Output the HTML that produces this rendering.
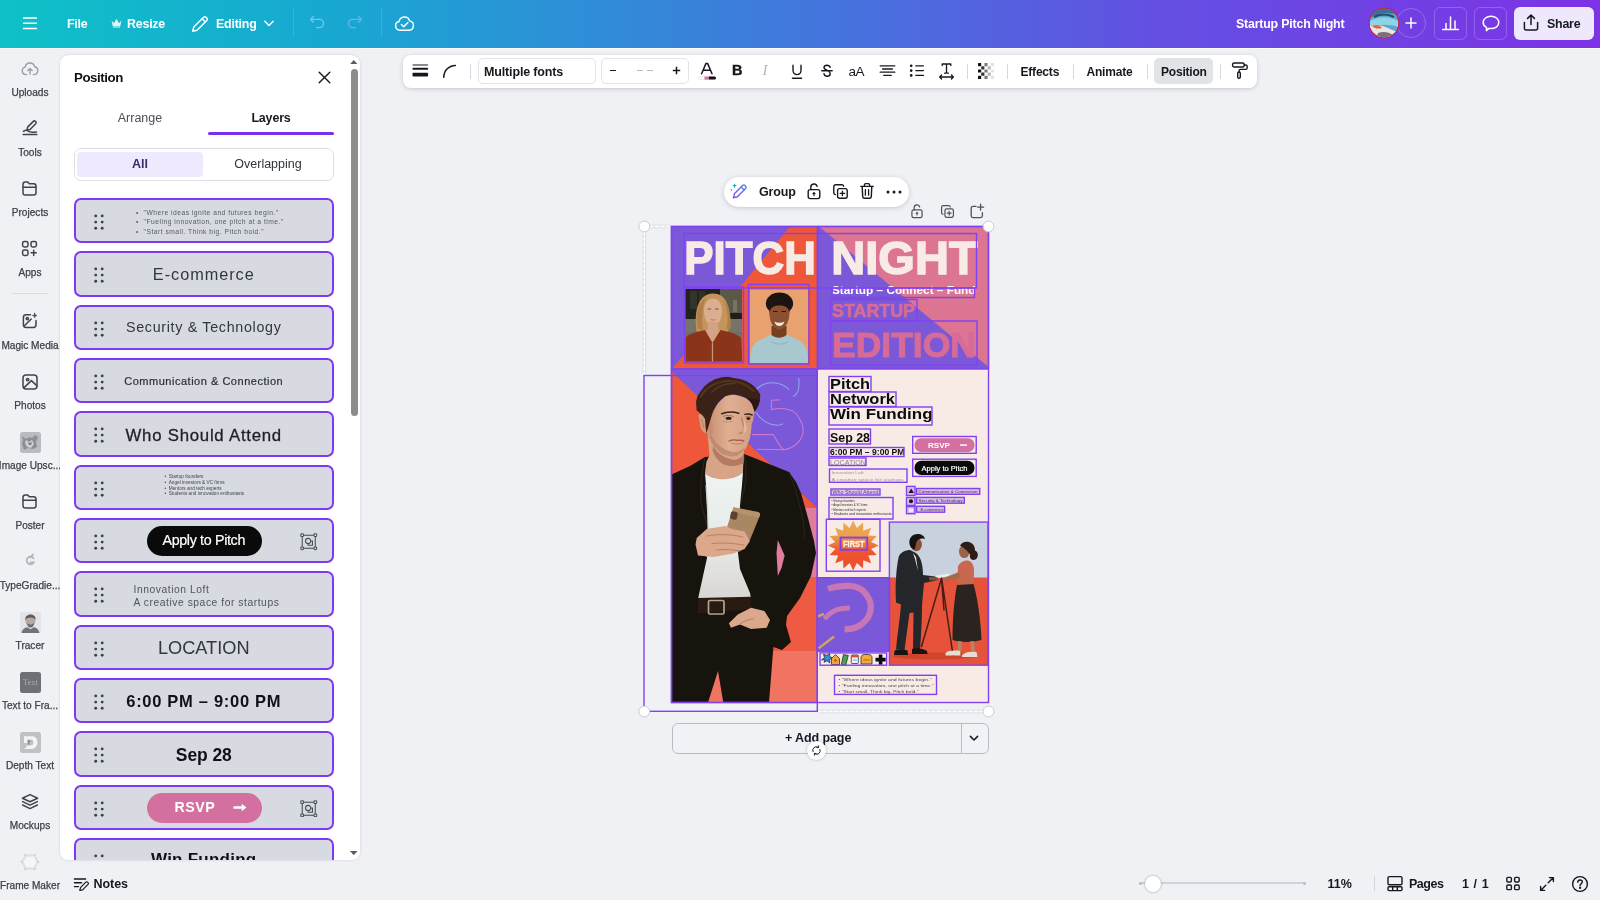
<!DOCTYPE html>
<html>
<head>
<meta charset="utf-8">
<title>Startup Pitch Night</title>
<style>
*{box-sizing:border-box;margin:0;padding:0}
html,body{width:1600px;height:900px;overflow:hidden;background:#f0f1f5;font-family:"Liberation Sans",sans-serif;color:#0e1318}
.abs{position:absolute}
#hdr,#rail,#panel,#tb,#cv,#bot{will-change:transform}
#hdr{position:absolute;left:0;top:0;width:1600px;height:47.500px;box-shadow:0 1px 0 rgba(255,255,255,.75);letter-spacing:-.2px;background:linear-gradient(90deg,#0ec1c7 0%,#19a6d2 22%,#3f7bdc 48%,#6350e2 72%,#7d32e6 100%);color:#fff;font-weight:700;font-size:12.4px}
#hdr .t{position:absolute;top:17.200px;line-height:15px;white-space:nowrap}
#rail{position:absolute;left:0;top:0;width:60px;height:900px}
#rail .it{-webkit-text-stroke:.25px #3c4148;position:absolute;left:-10px;width:80px;text-align:center;font-size:10.1px;color:#3c4148;white-space:nowrap;line-height:12px}
#rail svg{position:absolute}
#panel{position:absolute;left:60px;top:55px;width:300px;height:805px;background:#fff;border-radius:9px 9px 8px 8px;box-shadow:0 0 3px rgba(60,70,90,.18);overflow:hidden}
.layer{position:absolute;left:13.500px;width:260.500px;height:45.300px;background:#d8dae1;border:2px solid #8138f2;border-radius:7px;overflow:hidden}
.layer .dots{position:absolute;left:18px;top:14px;width:10px;height:16px}
.layer .c{position:absolute;left:0;right:0;text-align:center;white-space:nowrap;color:#20242b}
#tb{position:absolute;left:403px;top:55px;width:854px;height:33px;background:#fff;border-radius:8px;box-shadow:0 1px 4px rgba(50,60,80,.22)}
#tb .t{position:absolute;top:9.600px;letter-spacing:-.15px;font-size:12.5px;font-weight:700;line-height:15px;white-space:nowrap;color:#15191f}
#tb .sep{position:absolute;top:9px;width:1px;height:15px;background:#d5d8de}
#bot .t{position:absolute;font-size:12.5px;font-weight:700;line-height:15px;white-space:nowrap;color:#15191f}
</style>
</head>
<body>
<!-- HEADER -->
<div id="hdr">
  <svg class="abs" style="left:22px;top:15px" width="16" height="16" viewBox="0 0 16 16" fill="none" stroke="#fff" stroke-width="1.5" stroke-linecap="round"><path d="M1.6 3h12.8M1.6 8.3h12.8M1.6 13.6h12.8"/></svg>
  <div class="t" style="left:67px">File</div>
  <svg class="abs" style="left:111px;top:18px" width="11" height="10" viewBox="0 0 11 10" fill="#dff3fb"><path d="M0.6 2.6 3 5.2 5.5 0.8 8 5.2 10.4 2.6 9.3 8.2H1.7z"/><rect x="2" y="8.6" width="7" height="0.9"/></svg>
  <div class="t" style="left:127px">Resize</div>
  <svg class="abs" style="left:191px;top:15px" width="18" height="18" viewBox="0 0 18 18" fill="none" stroke="#fff" stroke-width="1.45" stroke-linejoin="round" stroke-linecap="round"><path d="M12.6 2.2a1.6 1.6 0 0 1 2.3 0l.9.9a1.6 1.6 0 0 1 0 2.3L6 15.2l-4.3 1.1 1.1-4.3z"/><path d="M11.2 3.8l3 3"/></svg>
  <div class="t" style="left:216px">Editing</div>
  <svg class="abs" style="left:263px;top:19px" width="12" height="9" viewBox="0 0 12 9" fill="none" stroke="#fff" stroke-width="1.5" stroke-linecap="round" stroke-linejoin="round"><path d="M1.8 2.3 6 6.5l4.2-4.2"/></svg>
  <div class="abs" style="left:293px;top:8px;width:1px;height:30px;background:rgba(255,255,255,.13)"></div>
  <svg class="abs" style="left:308px;top:14px" width="18" height="17" viewBox="0 0 18 17" fill="none" stroke="#6fc6ee" stroke-width="1.4" stroke-linecap="round" stroke-linejoin="round"><path d="M5.4 2.6 2.6 5.4l2.8 2.8"/><path d="M2.8 5.4h8.6a4.1 4.1 0 0 1 0 8.2H8.6"/></svg>
  <svg class="abs" style="left:346px;top:14px" width="18" height="17" viewBox="0 0 18 17" fill="none" stroke="#62b4ee" stroke-width="1.4" stroke-linecap="round" stroke-linejoin="round"><path d="M12.6 2.6l2.8 2.8-2.8 2.8"/><path d="M15.2 5.4H6.6a4.1 4.1 0 0 0 0 8.2h2.8"/></svg>
  <div class="abs" style="left:381px;top:8px;width:1px;height:30px;background:rgba(255,255,255,.13)"></div>
  <svg class="abs" style="left:394px;top:14px" width="21" height="18" viewBox="0 0 21 18" fill="none" stroke="#fff" stroke-width="1.45" stroke-linecap="round" stroke-linejoin="round"><path d="M6 16.2a4.4 4.4 0 0 1-.9-8.7 5.4 5.4 0 0 1 10.5-.6 4.7 4.7 0 0 1-.5 9.3z"/><path d="M7.4 10.6l2.3 2.2 4.2-4.4"/></svg>
  <div class="t" style="left:1236px">Startup Pitch Night</div>
  <div class="abs" style="left:1396px;top:8px;width:30px;height:30px;border-radius:50%;border:1px solid rgba(255,255,255,.22)"></div>
  <svg class="abs" style="left:1404px;top:16px" width="14" height="14" viewBox="0 0 14 14" fill="none" stroke="#fff" stroke-width="1.5" stroke-linecap="round"><path d="M7 2v10M2 7h10"/></svg>
  <svg class="abs" style="left:1368px;top:7px" width="32" height="32" viewBox="0 0 32 32"><defs><clipPath id="avc"><circle cx="16" cy="16" r="14.3"/></clipPath></defs><circle cx="16" cy="16" r="15.4" fill="#c32546"/><g clip-path="url(#avc)"><rect width="32" height="32" fill="#5aa7cf"/><path d="M0 0h32v9C22 4 10 6 0 12z" fill="#3a6f97"/><path d="M2 14c8-5 20-5 28 0v6c-8-3-20-3-28 1z" fill="#8fd3e6"/><path d="M0 20c8-3 14-2 20 1s9 4 12 3v8H0z" fill="#e9e4e6"/><path d="M4 19c4-2 8-1 10 2-3 1-7 1-10-2z" fill="#e2683a"/><path d="M10 26c5-2 11-1 15 2v4H8z" fill="#7c6f7c"/><path d="M6 10c6-3 14-3 20 0" stroke="#254b6b" stroke-width="2" fill="none"/></g></svg>
  <div class="abs" style="left:1434px;top:7px;width:33px;height:33px;border-radius:6px;border:1px solid rgba(255,255,255,.2)"></div>
  <svg class="abs" style="left:1441px;top:14px" width="19" height="18" viewBox="0 0 19 18" fill="none" stroke="#fff" stroke-width="1.5" stroke-linecap="round"><path d="M1.6 15.6h15.8M5 15V9.4M9.5 15V3M14 15V7"/></svg>
  <div class="abs" style="left:1474px;top:7px;width:33px;height:33px;border-radius:6px;border:1px solid rgba(255,255,255,.2)"></div>
  <svg class="abs" style="left:1481px;top:14px" width="20" height="19" viewBox="0 0 20 19" fill="none" stroke="#fff" stroke-width="1.5" stroke-linejoin="round"><path d="M10 2.2c4.4 0 7.8 2.7 7.8 6.2s-3.400 6.200-7.800 6.200c-.8 0-1.500-.1-2.200-.2L5.400 16.600l.1-3.200C3.500 12.300 2.200 10.500 2.200 8.400c0-3.500 3.400-6.200 7.800-6.200z"/></svg>
  <div class="abs" style="left:1514px;top:7px;width:80px;height:33px;border-radius:6px;background:#efe8fc"></div>
  <svg class="abs" style="left:1522px;top:13px" width="18" height="19" viewBox="0 0 18 19" fill="none" stroke="#15191f" stroke-width="1.5" stroke-linecap="round" stroke-linejoin="round"><path d="M9 11.600V2.200M5.600 5.400 9 2l3.400 3.400"/><path d="M2.400 9.400v6.200c0 .8.600 1.400 1.400 1.400h10.400c.8 0 1.400-.6 1.400-1.400V9.400"/></svg>
  <div class="t" style="left:1547px;color:#15191f">Share</div>
</div>
<!-- RAIL -->
<div id="rail">
<svg style="left:21px;top:61px" width="18" height="15" viewBox="0 0 18 15" fill="none" stroke="#9a9ea6" stroke-width="1.4" stroke-linecap="round" stroke-linejoin="round"><path d="M5.600 13.600H4.800a3.800 3.800 0 0 1-.6-7.500 4.800 4.800 0 0 1 9.400-.4 4 4 0 0 1-.4 7.900h-.8"/><path d="M9 13V7.600M6.800 9.600 9 7.400l2.200 2.200"/></svg>
<div class="it" style="top:86.5px">Uploads</div><svg style="left:22px;top:119px" width="17" height="18" viewBox="0 0 17 18" fill="none" stroke="#3f444b" stroke-width="1.5" stroke-linecap="round" stroke-linejoin="round"><path d="M11.300 2.400a1.700 1.700 0 0 1 2.400 2.400L8 10.500l-3 .7.600-3.100z"/><path d="M1.400 12.300c2-1.300 3.600-1.300 4.600-.2 1 1.100 5 1.300 8.400.900"/><path d="M1.200 15.600h13.600"/></svg>
<div class="it" style="top:146.5px">Tools</div><svg style="left:21px;top:180px" width="17" height="17" viewBox="0 0 17 17" fill="none" stroke="#3f444b" stroke-width="1.5" stroke-linecap="round" stroke-linejoin="round"><path d="M2 4.400c0-1.300 1-2.300 2.300-2.300h2.400l1.700 1.700h4.300c1.300 0 2.300 1 2.300 2.300v6.600c0 1.300-1 2.300-2.300 2.300H4.300C3 15 2 14 2 12.700z"/><path d="M2 7.300h13"/></svg>
<div class="it" style="top:206.5px">Projects</div><svg style="left:21px;top:240px" width="18" height="18" viewBox="0 0 18 18" fill="none" stroke="#3f444b" stroke-width="1.5" stroke-linecap="round" stroke-linejoin="round"><rect x="1.600" y="1.600" width="5.400" height="5.400" rx="1.700"/><rect x="10" y="1.600" width="5.400" height="5.400" rx="1.700"/><rect x="1.600" y="10" width="5.400" height="5.400" rx="1.700"/><path d="M12.700 10.200v5.200M10.100 12.800h5.200"/></svg>
<div class="it" style="top:266.5px">Apps</div><div class="abs" style="left:12px;top:293px;width:36px;height:1px;background:#d9dbe0"></div>
<svg style="left:21px;top:312px" width="18" height="18" viewBox="0 0 18 18" fill="none" stroke="#3f444b" stroke-width="1.5" stroke-linecap="round" stroke-linejoin="round"><path d="M9.500 2.800H5a2.600 2.600 0 0 0-2.600 2.600v7.400A2.600 2.600 0 0 0 5 15.400h7.400a2.600 2.600 0 0 0 2.600-2.600V8.500"/><path d="M3.400 13.800l6.800-6.800"/><circle cx="6.300" cy="6.600" r="1.100"/><path d="M13.700 1.200l.6 1.700 1.700.6-1.700.6-.6 1.700-.6-1.700-1.700-.6 1.700-.6z" fill="#3f444b" stroke-width=".6"/></svg>
<div class="it" style="top:340px">Magic Media</div><svg style="left:21px;top:373px" width="18" height="18" viewBox="0 0 18 18" fill="none" stroke="#3f444b" stroke-width="1.5" stroke-linecap="round" stroke-linejoin="round"><rect x="2" y="2" width="14" height="14" rx="3"/><circle cx="6.600" cy="6.600" r="1.200"/><path d="M3 14.600l7.400-7 5.400 5"/></svg>
<div class="it" style="top:400px">Photos</div><svg style="left:20px;top:432px" width="21" height="21" viewBox="0 0 21 21"><rect width="21" height="21" rx="2.500" fill="#b9bbbf"/><path d="M2 4l4 3 3-2 3 1 3-3 3 2-2 5 1 5-4 2-5-1-4 2-2-6 1-4z" fill="#8d8f94"/><path d="M6 8l3 2 3-2 2 4-3 4-4-1-2-4z" fill="#cfd0d3"/><path d="M8 10l2 1 2-1-1 3-2 0z" fill="#77797e"/></svg>
<div class="it" style="top:460px">Image Upsc...</div><svg style="left:21px;top:493px" width="17" height="17" viewBox="0 0 17 17" fill="none" stroke="#3f444b" stroke-width="1.5" stroke-linecap="round" stroke-linejoin="round"><path d="M2 4.400c0-1.300 1-2.300 2.300-2.300h2.400l1.700 1.700h4.300c1.300 0 2.300 1 2.300 2.300v6.600c0 1.300-1 2.300-2.300 2.300H4.300C3 15 2 14 2 12.700z"/><path d="M2 7.300h13"/></svg>
<div class="it" style="top:520px">Poster</div><svg style="left:24px;top:553px" width="12" height="14" viewBox="0 0 12 14" fill="none" stroke="#b3b5ba" stroke-width="1.800" stroke-linecap="round"><path d="M9.500 5.200A3.800 3.800 0 1 0 9.800 9.400H6.400"/><path d="M6.600 4.400 9 1.400"/></svg>
<div class="it" style="top:580px">TypeGradie...</div><svg style="left:20px;top:612px" width="21" height="21" viewBox="0 0 21 21"><rect width="21" height="21" rx="2.500" fill="#e3e4e7"/><path d="M5.500 9.500c-.8-4 1.400-6.300 5-6.300s5.600 2.300 4.800 6.300c-.2 2.400-1.800 4.800-4.800 4.800s-4.700-2.400-5-4.800z" fill="#b4aaa5"/><path d="M5.400 8c-.6-3.400 1.700-5.600 5.200-5.600 3.400 0 5.400 2.200 4.800 5.600-1.200-2-2.400-2.600-4.900-2.600S6.500 6 5.400 8z" fill="#5d5a5b"/><path d="M7 10.800c0 3 1.300 4.700 3.500 4.700s3.500-1.700 3.500-4.700c-1 1.400-2.200 1.900-3.500 1.900S8 12.200 7 10.800z" fill="#6b6566"/><path d="M1.500 21c.5-3.600 3-5.400 5.800-5.800l3.200 2 3.200-2c2.800.4 5.300 2.200 5.800 5.800z" fill="#6f7379"/></svg>
<div class="it" style="top:640px">Tracer</div><svg style="left:20px;top:672px" width="21" height="21" viewBox="0 0 21 21"><rect width="21" height="21" rx="2.500" fill="#6e7075"/><text x="10.500" y="13.200" font-family="Liberation Serif" font-size="8.500" fill="#a9abb0" text-anchor="middle">Text</text></svg>
<div class="it" style="top:700px">Text to Fra...</div><svg style="left:20px;top:732px" width="21" height="21" viewBox="0 0 21 21"><rect width="21" height="21" rx="2.500" fill="#bfc1c5"/><path d="M4 4.200h7.800c3.600 0 5.600 2.500 5.600 6.200 0 4-2.600 6.600-7 6.600H3.600c2-.8 3-2 3.200-3.600h3.400c2 0 3.200-1.100 3.200-3 0-1.800-1.100-2.900-3-2.900H7v3.400H4z" fill="#f4f4f6"/><path d="M8 8.600h2.600v1.200H9.400v2.600H8z" fill="#83868c"/></svg>
<div class="it" style="top:760px">Depth Text</div><svg style="left:20px;top:793px" width="20" height="18" viewBox="0 0 20 18" fill="none" stroke="#3f444b" stroke-width="1.5" stroke-linecap="round" stroke-linejoin="round"><path d="M10 1.600l7.600 3.600L10 8.800 2.400 5.200z"/><path d="M2.600 8.600 10 12.200l7.400-3.600"/><path d="M2.600 12 10 15.600l7.400-3.600"/></svg>
<div class="it" style="top:820px">Mockups</div><svg style="left:20px;top:853px" width="20" height="18" viewBox="0 0 20 18"><path d="M5.200 1.200h9.600L19 9l-4.200 7.800H5.200L1 9z" fill="#dfe0e3"/><path d="M6.600 3.600h6.800L16.600 9l-3.200 5.400H6.600L3.400 9z" fill="#f6f6f8"/><circle cx="5.200" cy="1.800" r=".9" fill="#c8cacf"/><circle cx="14.800" cy="1.800" r=".9" fill="#c8cacf"/><circle cx="18.400" cy="9" r=".9" fill="#c8cacf"/><circle cx="1.600" cy="9" r=".9" fill="#c8cacf"/><circle cx="5.200" cy="16.200" r=".9" fill="#c8cacf"/><circle cx="14.800" cy="16.200" r=".9" fill="#c8cacf"/></svg>
<div class="it" style="top:880px">Frame Maker</div></div>
<!-- PANEL -->
<div id="panel">
<div class="abs" style="left:14px;top:14.500px;font-size:13.300px;font-weight:700;line-height:15px;letter-spacing:-.45px;color:#0e1318">Position</div>
<svg class="abs" style="left:258px;top:16px" width="13" height="13" viewBox="0 0 13 13" fill="none" stroke="#15191f" stroke-width="1.400" stroke-linecap="round"><path d="M1.200 1.200l10.600 10.600M11.800 1.200 1.200 11.800"/></svg>
<div class="abs" style="left:40px;top:56px;width:80px;text-align:center;font-size:12.500px;line-height:15px;color:#4a4f57">Arrange</div>
<div class="abs" style="left:171px;top:56px;width:80px;text-align:center;font-size:12.500px;line-height:15px;font-weight:700;color:#15191f;letter-spacing:-.2px">Layers</div>
<div class="abs" style="left:148px;top:76.500px;width:126px;height:3px;border-radius:1.500px;background:#7a30ea"></div>
<div class="abs" style="left:13.500px;top:92.500px;width:260.500px;height:33.500px;border:1px solid #dcdfe4;border-radius:7px"></div>
<div class="abs" style="left:17px;top:96.500px;width:125.500px;height:25.500px;border-radius:4px;background:#efe9fd"></div>
<div class="abs" style="left:40px;top:101.500px;width:80px;text-align:center;font-size:12.500px;line-height:15px;font-weight:700;color:#3b2a66">All</div>
<div class="abs" style="left:158px;top:101.500px;width:100px;text-align:center;font-size:12.500px;line-height:15px;color:#2f343b">Overlapping</div>
<div class="layer" style="top:143.0px"><svg class="dots" width="10" height="16" viewBox="0 0 10 16" fill="#3d424a"><circle cx="1.700" cy="1.900" r="1.450"/><circle cx="8.200" cy="1.900" r="1.450"/><circle cx="1.700" cy="8.100" r="1.450"/><circle cx="8.200" cy="8.100" r="1.450"/><circle cx="1.700" cy="14.300" r="1.450"/><circle cx="8.200" cy="14.300" r="1.450"/></svg><div class="abs" style="left:60.500px;top:7.800px;font-size:6.700px;line-height:9.600px;color:#555a62;white-space:nowrap;letter-spacing:.5px">&#8226; &nbsp;"Where ideas ignite and futures begin."<br>&#8226; &nbsp;"Fueling innovation, one pitch at a time."<br>&#8226; &nbsp;"Start small. Think big. Pitch bold."</div></div>
<div class="layer" style="top:196.3px"><svg class="dots" width="10" height="16" viewBox="0 0 10 16" fill="#3d424a"><circle cx="1.700" cy="1.900" r="1.450"/><circle cx="8.200" cy="1.900" r="1.450"/><circle cx="1.700" cy="8.100" r="1.450"/><circle cx="8.200" cy="8.100" r="1.450"/><circle cx="1.700" cy="14.300" r="1.450"/><circle cx="8.200" cy="14.300" r="1.450"/></svg><div class="c" style="top:11.300px;font-size:16.300px;line-height:18px;letter-spacing:.95px;color:#32363d">E-commerce</div></div>
<div class="layer" style="top:249.7px"><svg class="dots" width="10" height="16" viewBox="0 0 10 16" fill="#3d424a"><circle cx="1.700" cy="1.900" r="1.450"/><circle cx="8.200" cy="1.900" r="1.450"/><circle cx="1.700" cy="8.100" r="1.450"/><circle cx="8.200" cy="8.100" r="1.450"/><circle cx="1.700" cy="14.300" r="1.450"/><circle cx="8.200" cy="14.300" r="1.450"/></svg><div class="c" style="top:12px;font-size:14.300px;line-height:17px;letter-spacing:.68px;color:#32363d">Security &amp; Technology</div></div>
<div class="layer" style="top:303.0px"><svg class="dots" width="10" height="16" viewBox="0 0 10 16" fill="#3d424a"><circle cx="1.700" cy="1.900" r="1.450"/><circle cx="8.200" cy="1.900" r="1.450"/><circle cx="1.700" cy="8.100" r="1.450"/><circle cx="8.200" cy="8.100" r="1.450"/><circle cx="1.700" cy="14.300" r="1.450"/><circle cx="8.200" cy="14.300" r="1.450"/></svg><div class="c" style="top:13.500px;font-size:11px;line-height:14px;letter-spacing:.52px;color:#2b2f36;-webkit-text-stroke:.2px #2b2f36">Communication &amp; Connection</div></div>
<div class="layer" style="top:356.3px"><svg class="dots" width="10" height="16" viewBox="0 0 10 16" fill="#3d424a"><circle cx="1.700" cy="1.900" r="1.450"/><circle cx="8.200" cy="1.900" r="1.450"/><circle cx="1.700" cy="8.100" r="1.450"/><circle cx="8.200" cy="8.100" r="1.450"/><circle cx="1.700" cy="14.300" r="1.450"/><circle cx="8.200" cy="14.300" r="1.450"/></svg><div class="c" style="top:12.300px;font-size:16.800px;line-height:19px;letter-spacing:.75px;color:#1d2127;-webkit-text-stroke:.3px #1d2127">Who Should Attend</div></div>
<div class="layer" style="top:409.7px"><svg class="dots" width="10" height="16" viewBox="0 0 10 16" fill="#3d424a"><circle cx="1.700" cy="1.900" r="1.450"/><circle cx="8.200" cy="1.900" r="1.450"/><circle cx="1.700" cy="8.100" r="1.450"/><circle cx="8.200" cy="8.100" r="1.450"/><circle cx="1.700" cy="14.300" r="1.450"/><circle cx="8.200" cy="14.300" r="1.450"/></svg><div class="abs" style="left:89px;top:7px;font-size:4.700px;line-height:5.900px;color:#3f444b;white-space:nowrap">&#8226; &nbsp;Startup founders<br>&#8226; &nbsp;Angel investors &amp; VC firms<br>&#8226; &nbsp;Mentors and tech experts<br>&#8226; &nbsp;Students and innovation enthusiasts</div></div>
<div class="layer" style="top:463.0px"><svg class="dots" width="10" height="16" viewBox="0 0 10 16" fill="#3d424a"><circle cx="1.700" cy="1.900" r="1.450"/><circle cx="8.200" cy="1.900" r="1.450"/><circle cx="1.700" cy="8.100" r="1.450"/><circle cx="8.200" cy="8.100" r="1.450"/><circle cx="1.700" cy="14.300" r="1.450"/><circle cx="8.200" cy="14.300" r="1.450"/></svg><div class="abs" style="left:71px;top:6px;width:115px;height:29.500px;border-radius:15px;background:#0a0a0a"></div><div class="c" style="top:12px;font-size:14.300px;line-height:17px;color:#fff;letter-spacing:-.35px;-webkit-text-stroke:.2px #fff">Apply to Pitch</div><svg class="abs" style="left:224.800px;top:13px" width="17.500" height="17.500" viewBox="0 0 18 18" fill="none" stroke="#4a4f57" stroke-width="1.100"><rect x="2.300" y="2.300" width="13.400" height="13.400"/><rect x=".8" y=".8" width="2.800" height="2.800" rx=".9" fill="#d9dbe2"/><rect x="14.400" y=".8" width="2.800" height="2.800" rx=".9" fill="#d9dbe2"/><rect x=".8" y="14.400" width="2.800" height="2.800" rx=".9" fill="#d9dbe2"/><rect x="14.400" y="14.400" width="2.800" height="2.800" rx=".9" fill="#d9dbe2"/><circle cx="8.400" cy="8.200" r="2.700"/><path d="M8.400 11v1.600h4.400V8.200h-1.700"/></svg></div>
<div class="layer" style="top:516.3px"><svg class="dots" width="10" height="16" viewBox="0 0 10 16" fill="#3d424a"><circle cx="1.700" cy="1.900" r="1.450"/><circle cx="8.200" cy="1.900" r="1.450"/><circle cx="1.700" cy="8.100" r="1.450"/><circle cx="8.200" cy="8.100" r="1.450"/><circle cx="1.700" cy="14.300" r="1.450"/><circle cx="8.200" cy="14.300" r="1.450"/></svg><div class="abs" style="left:58px;top:9.500px;font-size:10.300px;line-height:13.200px;letter-spacing:.55px;color:#50555c;white-space:nowrap">Innovation Loft<br>A creative space for startups</div></div>
<div class="layer" style="top:569.7px"><svg class="dots" width="10" height="16" viewBox="0 0 10 16" fill="#3d424a"><circle cx="1.700" cy="1.900" r="1.450"/><circle cx="8.200" cy="1.900" r="1.450"/><circle cx="1.700" cy="8.100" r="1.450"/><circle cx="8.200" cy="8.100" r="1.450"/><circle cx="1.700" cy="14.300" r="1.450"/><circle cx="8.200" cy="14.300" r="1.450"/></svg><div class="c" style="top:11.300px;font-size:18.200px;line-height:21px;letter-spacing:0;color:#32363d">LOCATION</div></div>
<div class="layer" style="top:623.0px"><svg class="dots" width="10" height="16" viewBox="0 0 10 16" fill="#3d424a"><circle cx="1.700" cy="1.900" r="1.450"/><circle cx="8.200" cy="1.900" r="1.450"/><circle cx="1.700" cy="8.100" r="1.450"/><circle cx="8.200" cy="8.100" r="1.450"/><circle cx="1.700" cy="14.300" r="1.450"/><circle cx="8.200" cy="14.300" r="1.450"/></svg><div class="c" style="top:11.500px;font-size:16.500px;line-height:19px;font-weight:700;letter-spacing:.7px;color:#0e1116">6:00 PM &#8211; 9:00 PM</div></div>
<div class="layer" style="top:676.3px"><svg class="dots" width="10" height="16" viewBox="0 0 10 16" fill="#3d424a"><circle cx="1.700" cy="1.900" r="1.450"/><circle cx="8.200" cy="1.900" r="1.450"/><circle cx="1.700" cy="8.100" r="1.450"/><circle cx="8.200" cy="8.100" r="1.450"/><circle cx="1.700" cy="14.300" r="1.450"/><circle cx="8.200" cy="14.300" r="1.450"/></svg><div class="c" style="top:11.500px;font-size:17.500px;line-height:21px;font-weight:700;letter-spacing:-.1px;color:#0e1116">Sep 28</div></div>
<div class="layer" style="top:729.7px"><svg class="dots" width="10" height="16" viewBox="0 0 10 16" fill="#3d424a"><circle cx="1.700" cy="1.900" r="1.450"/><circle cx="8.200" cy="1.900" r="1.450"/><circle cx="1.700" cy="8.100" r="1.450"/><circle cx="8.200" cy="8.100" r="1.450"/><circle cx="1.700" cy="14.300" r="1.450"/><circle cx="8.200" cy="14.300" r="1.450"/></svg><div class="abs" style="left:71.500px;top:6.500px;width:114.500px;height:30px;border-radius:15px;background:#d4709f"></div><div class="abs" style="left:99px;top:12.500px;font-size:14.200px;line-height:17px;font-weight:700;color:#fff;letter-spacing:.55px">RSVP</div><svg class="abs" style="left:157px;top:16px" width="14" height="9" viewBox="0 0 14 9" fill="#fff"><path d="M.5 3.300h8.200V.8L13.400 4.500 8.700 8.200V5.700H.5z"/></svg><svg class="abs" style="left:224.800px;top:13px" width="17.500" height="17.500" viewBox="0 0 18 18" fill="none" stroke="#4a4f57" stroke-width="1.100"><rect x="2.300" y="2.300" width="13.400" height="13.400"/><rect x=".8" y=".8" width="2.800" height="2.800" rx=".9" fill="#d9dbe2"/><rect x="14.400" y=".8" width="2.800" height="2.800" rx=".9" fill="#d9dbe2"/><rect x=".8" y="14.400" width="2.800" height="2.800" rx=".9" fill="#d9dbe2"/><rect x="14.400" y="14.400" width="2.800" height="2.800" rx=".9" fill="#d9dbe2"/><circle cx="8.400" cy="8.200" r="2.700"/><path d="M8.400 11v1.600h4.400V8.200h-1.700"/></svg></div>
<div class="layer" style="top:783.0px"><svg class="dots" width="10" height="16" viewBox="0 0 10 16" fill="#3d424a"><circle cx="1.700" cy="1.900" r="1.450"/><circle cx="8.200" cy="1.900" r="1.450"/><circle cx="1.700" cy="8.100" r="1.450"/><circle cx="8.200" cy="8.100" r="1.450"/><circle cx="1.700" cy="14.300" r="1.450"/><circle cx="8.200" cy="14.300" r="1.450"/></svg><div class="c" style="top:8.800px;font-size:17px;line-height:21px;font-weight:700;letter-spacing:.25px;color:#0e1116">Win Funding</div></div>
<div class="abs" style="left:290.500px;top:13.500px;width:7px;height:347px;border-radius:3.500px;background:#8c8c8c"></div>
<svg class="abs" style="left:290px;top:4.500px" width="7.500" height="4.200" viewBox="0 0 9 5" fill="#5a5a5a"><path d="M4.500 0 9 5H0z"/></svg>
<svg class="abs" style="left:290px;top:795.500px" width="7.500" height="4.200" viewBox="0 0 9 5" fill="#5a5a5a"><path d="M0 0h9L4.500 5z"/></svg>
</div>
<!-- TOOLBAR -->
<div id="tb">
<svg class="abs" style="left:8.5px;top:8px" width="17" height="16" viewBox="0 0 17 16" fill="#15191f"><rect x=".5" y="1.500" width="15.600" height="1" rx=".5"/><rect x=".5" y="4.700" width="15.600" height="2" rx=".6"/><rect x=".5" y="9.800" width="15.600" height="3.800" rx=".8"/></svg>
<svg class="abs" style="left:39px;top:8px" width="16" height="16" viewBox="0 0 16 16" fill="none" stroke="#15191f" stroke-width="1.500" stroke-linecap="round"><path d="M1.800 14.200C1.800 7.600 6.400 2.600 13.400 2.400"/></svg>
<div class="sep" style="left:67px"></div>
<div class="abs" style="left:74.5px;top:2.5px;width:118px;height:26px;border:1px solid #e1e3e7;border-radius:5px"></div>
<div class="t" style="left:81px">Multiple fonts</div>
<div class="abs" style="left:197.5px;top:2.5px;width:88.500px;height:26px;border:1px solid #e1e3e7;border-radius:5px"></div>
<div class="abs" style="left:206.5px;top:14.799999999999997px;width:6.500px;height:1.500px;background:#15191f"></div>
<div class="abs" style="left:234px;top:14.599999999999994px;width:6px;height:1.200px;background:#b9bcc2"></div><div class="abs" style="left:243.5px;top:14.599999999999994px;width:6px;height:1.200px;background:#b9bcc2"></div>
<svg class="abs" style="left:268.5px;top:11px" width="9" height="9" viewBox="0 0 9 9" stroke="#15191f" stroke-width="1.500"><path d="M4.500 .8v7.400M.8 4.500h7.400"/></svg>
<svg class="abs" style="left:294px;top:6px" width="20" height="20" viewBox="0 0 20 20"><path d="M4.600 12.800 9 2.400h1.600l4.400 10.400M6.200 9.300h7.200" fill="none" stroke="#15191f" stroke-width="1.500" stroke-linejoin="round" stroke-linecap="round"/><rect x="1" y="15.600" width="18" height="3" rx="1.500" fill="#fff" stroke="#d8dade" stroke-width=".5"/><rect x="7.500" y="15.600" width="4.500" height="3" fill="#d4709f"/><path d="M12 15.600h5.500a1.500 1.500 0 0 1 0 3H12z" fill="#111"/></svg>
<div class="abs" style="left:329px;top:7px;font-size:14.500px;font-weight:700;line-height:17px;color:#15191f;-webkit-text-stroke:.4px #15191f">B</div>
<div class="abs" style="left:359.5px;top:7px;font-family:'Liberation Serif',serif;font-style:italic;font-size:15px;line-height:17px;color:#b3b6bb">I</div>
<svg class="abs" style="left:387px;top:8px" width="14" height="17" viewBox="0 0 14 17" fill="none" stroke="#15191f" stroke-width="1.400" stroke-linecap="round"><path d="M3 2.200v5.400a4 4 0 0 0 8 0V2.200"/><path d="M2.400 15.300h9.200"/></svg>
<svg class="abs" style="left:417px;top:8px" width="14" height="16" viewBox="0 0 14 16" fill="none" stroke="#15191f" stroke-width="1.400" stroke-linecap="round"><path d="M10.200 4.400C9.800 3 8.600 2.200 7 2.200 5.200 2.200 4 3.200 4 4.600c0 1.300 1 2 3 2.600M4 10.600c.3 1.600 1.400 2.600 3.200 2.600 1.800 0 3-1 3-2.500 0-.8-.4-1.500-1.200-2"/><path d="M1.800 7.700h10.400"/></svg>
<div class="abs" style="left:445.5px;top:7.5px;font-size:13.500px;line-height:17px;color:#15191f;letter-spacing:-.6px">aA</div>
<svg class="abs" style="left:475.5px;top:8px" width="17" height="15" viewBox="0 0 17 15" fill="none" stroke="#15191f" stroke-width="1.300" stroke-linecap="round"><path d="M1.200 2.800h14.600M3.600 6h9.800M1.200 9.200h14.600M4.800 12.400h7.400"/></svg>
<svg class="abs" style="left:506px;top:8px" width="16" height="15" viewBox="0 0 16 15" fill="#15191f" stroke="#15191f" stroke-width="1.300" stroke-linecap="round"><circle cx="2.200" cy="2.800" r=".9" stroke="none" /><circle cx="2.200" cy="7.600" r=".9" stroke="none"/><circle cx="2.200" cy="12.400" r=".9" stroke="none"/><circle cx="2.200" cy="2.800" r="1.300" stroke="none"/><circle cx="2.200" cy="7.600" r="1.300" stroke="none"/><circle cx="2.200" cy="12.400" r="1.300" stroke="none"/><path d="M6.800 2.800h7.600M6.800 7.600h7.600M6.800 12.400h7.600"/></svg>
<svg class="abs" style="left:535px;top:7px" width="17" height="18" viewBox="0 0 17 18" fill="none" stroke="#15191f" stroke-width="1.300" stroke-linecap="round" stroke-linejoin="round"><path d="M4.200 3.600V2h8.600v1.600M8.500 2v9.200M6.600 11.200h3.800"/><path d="M1.600 15h13.800M3.600 13 1.600 15l2 2M13.400 13l2 2-2 2"/></svg>
<div class="sep" style="left:564px"></div>
<svg class="abs" style="left:575px;top:8px" width="16" height="16" viewBox="0 0 16 16"><rect x="0.0" y="0.0" width="3.200" height="3.200" rx=".6" fill="#111" opacity="1"/><rect x="6.4" y="0.0" width="3.200" height="3.200" rx=".6" fill="#111" opacity="0.55"/><rect x="12.8" y="0.0" width="3.200" height="3.200" rx=".6" fill="#111" opacity="0.12"/><rect x="3.2" y="3.2" width="3.200" height="3.200" rx=".6" fill="#111" opacity="0.85"/><rect x="9.6" y="3.2" width="3.200" height="3.200" rx=".6" fill="#111" opacity="0.3"/><rect x="0.0" y="6.4" width="3.200" height="3.200" rx=".6" fill="#111" opacity="1"/><rect x="6.4" y="6.4" width="3.200" height="3.200" rx=".6" fill="#111" opacity="0.55"/><rect x="12.8" y="6.4" width="3.200" height="3.200" rx=".6" fill="#111" opacity="0.12"/><rect x="3.2" y="9.6" width="3.200" height="3.200" rx=".6" fill="#111" opacity="0.85"/><rect x="9.6" y="9.6" width="3.200" height="3.200" rx=".6" fill="#111" opacity="0.3"/><rect x="0.0" y="12.8" width="3.200" height="3.200" rx=".6" fill="#111" opacity="1"/><rect x="6.4" y="12.8" width="3.200" height="3.200" rx=".6" fill="#111" opacity="0.55"/><rect x="12.8" y="12.8" width="3.200" height="3.200" rx=".6" fill="#111" opacity="0.12"/></svg>
<div class="sep" style="left:604px"></div>
<div class="t" style="left:617.5px;font-size:12px;letter-spacing:-.2px">Effects</div>
<div class="sep" style="left:669.5px"></div>
<div class="t" style="left:683.5px;font-size:12px;letter-spacing:-.2px">Animate</div>
<div class="sep" style="left:743.5px"></div>
<div class="abs" style="left:750.5px;top:3px;width:59.500px;height:25.500px;border-radius:5px;background:#e1e3e6"></div>
<div class="t" style="left:758px;font-size:12px;letter-spacing:-.2px">Position</div>
<div class="sep" style="left:817px"></div>
<svg class="abs" style="left:828px;top:6px" width="18" height="19" viewBox="0 0 18 19" fill="none" stroke="#15191f" stroke-width="1.400" stroke-linecap="round" stroke-linejoin="round"><rect x="1.600" y="2" width="11.600" height="4" rx="1.600"/><path d="M13.200 4h1.400c.9 0 1.600.7 1.600 1.600v1.200c0 .9-.7 1.600-1.600 1.600H9.600c-.9 0-1.600.7-1.600 1.600v1"/><rect x="6.700" y="11" width="2.600" height="6.200" rx="1.300"/></svg>
</div>
<!-- CANVAS -->
<div id="cv">
<svg class="abs" style="left:630px;top:215px" width="380" height="510" viewBox="630 215 380 510" font-family="Liberation Sans, sans-serif">
<!--P-BASE-->
<rect x="671.500" y="226.500" width="317" height="476" fill="#7a58d8"/>
<path d="M790 226.500H817.500V369H672z" fill="#ee573a"/>
<path d="M819 226.500H988.500V367z" fill="#dc7591"/>
<rect x="817.300" y="369" width="171.200" height="333.500" fill="#f8ebe6"/>
<path d="M671.500 371.500 817.300 508V590H671.500z" fill="#ee573a"/>
<rect x="760" y="508" width="57.300" height="70" fill="#e07d9f"/>
<rect x="740" y="577" width="77.300" height="75" fill="#ee5a42"/>
<rect x="690" y="651" width="127.300" height="51.500" fill="#f17463"/>
<rect x="817.300" y="577.700" width="72.200" height="73.600" fill="#7a58d8"/>
<!-- decorative 3-outline in man block -->
<g fill="none" stroke="#d07ad2" stroke-width="1.100" opacity=".95" stroke-linejoin="round"><path d="M779.500 399.900 771.400 400.300V409.600C776 408.500 780 408.300 784.100 408.700 787.500 409.200 790.500 410 792.900 411.100 796 413 798.300 415.800 799.700 418.900 802 423 803.200 426 803.200 429.700 803.200 434 802 437.500 799.700 440.400 797.500 443.500 795 445.800 791.900 447.300 789.500 448.700 787 449.500 784.100 449.700L756.700 449.200"/><path d="M751.800 434.600H773.300C775 437 776 439.500 777.300 441.400 778.500 443.800 779.800 445.800 781.200 447.300 782 448.300 783 449.200 784.100 449.700"/></g>
<g fill="none" stroke="#8facf0" stroke-width="1.100" opacity=".9"><path d="M755.800 390.100C757.500 387.800 760 386 762.600 384.700 765.500 383.300 769 382.800 772.400 382.800 776 382.800 779.500 383.500 782.100 384.700 785 385.800 787.300 387.500 789 389.600"/><path d="M792.900 396.900C795 395.600 796.800 393.800 797.800 391.600 799 388 799.200 383 798.800 377.900"/><path d="M755.800 412.100C757.300 414.800 759.300 417 761.600 418.900 764 421 766.600 422.700 769.400 423.800 772.300 424.800 775.300 425.400 778.200 425.300 780 425.200 781.700 424.600 783 423.800"/></g>
<!--P-MAN-->
<g>
<defs><clipPath id="mclip"><rect x="671.500" y="369" width="145.800" height="333.500"/></clipPath>
<linearGradient id="skin1" x1="0" y1="0" x2="1" y2="0"><stop offset="0" stop-color="#c98f73"/><stop offset=".45" stop-color="#e0b093"/><stop offset="1" stop-color="#d49c7f"/></linearGradient>
<linearGradient id="shirt" x1="0" y1="0" x2="0" y2="1"><stop offset="0" stop-color="#eef4f2"/><stop offset=".6" stop-color="#e6e9e8"/><stop offset="1" stop-color="#d9d6d2"/></linearGradient></defs>
<g clip-path="url(#mclip)">
<!-- jacket + trousers -->
<path d="M671.500 474.500 690 466 705 457 744 454 757 459 769 464 789 472 796 482 801 493 808 518 814 541 816 553 811 576 800 598 787 616 786 625 791 642 782 650 773.500 647 773 652 769 702.500H723.300L718 671 708 702.500H671.500z" fill="#17130d"/>
<path d="M705 457c-3 14-5 30-4 46l6 22M744 454c4 16 2 34-4 50l-3 12" stroke="#2e2920" stroke-width="1" fill="none"/>
<path d="M789 472c8 20 14 42 16 66" stroke="#2a251d" stroke-width="1" fill="none"/>
<!-- gap between arm and torso -->
<path d="M777.800 540 784.600 555.600 781.500 568 777.800 576 776.500 553z" fill="#e07d9f"/>
<!-- shirt -->
<path d="M705 473C712 480 734 481 743 472L742 485 740 505 738 553 740 569 750 593 751 598 698 599 703 576 707 558 708 525 706 485z" fill="url(#shirt)"/>
<path d="M706 485c1 14 2 28 2 42l-1 30" stroke="#c9cfcd" stroke-width="1.200" fill="none"/>
<!-- neck -->
<path d="M707.600 434 709.400 455.600 706.400 461.700 705 473C712 481 734 482 743 472L743.700 453 745 444z" fill="#d7a488"/>
<path d="M713 446c5 8 13 13 22 14 4-1 7-3 9-6l-.3 9c-5 3-12 4-19 2-6-3-10-8-12-14z" fill="#b47b60"/>
<!-- face -->
<path d="M710.700 419 713.700 410.300 718 403 725.300 396.300 734 394.400 746 398 752.200 404.200 754.700 411.600 752.800 421.300 751.600 424 751 432 749.800 438.500 746.100 448.200 741 454 736.300 456 730 456.500 725.300 455.600 719 451.500 713.100 445.800 709.500 439 707.600 433.600z" fill="url(#skin1)"/>
<!-- ear -->
<path d="M698.400 415.200c1.200-2 4.200-2.200 6.600.4l3.600 8.400-.4 9.600c-3.400.4-6.600-2.400-7.800-6.800z" fill="#d29b7e"/>
<path d="M701 419c1.500 3 2.500 6 2.800 9" stroke="#b27a5f" stroke-width=".8" fill="none"/>
<!-- cheek/jaw shading -->
<path d="M709.500 436c2 7 7 14 14 18.500l7 2 6-.5c4-2 7-5 9-9-3 3-7 5-12 5-9-1-17-7-22-16z" fill="#b9826a" opacity=".75"/>
<path d="M712 420c1 6 1 12 0 17l-3-5z" fill="#c48d72" opacity=".8"/>
<!-- brows, eyes -->
<path d="M721.700 413.800c5-2.200 11-2.400 17.100-.6" stroke="#3a2317" stroke-width="1.500" stroke-linecap="round" fill="none"/>
<path d="M744.900 414.400c2.400-.7 5-.5 7.300.6" stroke="#3a2317" stroke-width="1.400" stroke-linecap="round" fill="none"/>
<ellipse cx="728.600" cy="418.300" rx="3" ry="1.500" fill="#2b1a13"/><ellipse cx="748.400" cy="418.600" rx="2.100" ry="1.300" fill="#2b1a13"/>
<path d="M723 416.500c3-1.500 7.500-1.500 11 .3M745.500 417c1.800-.9 4-.8 5.800.2" stroke="#8d5a45" stroke-width=".9" fill="none" opacity=".8"/>
<path d="M722.500 421c3 1.500 7.500 1.500 11 0M745.500 421.300c1.600.8 3.800.8 5.600 0" stroke="#bd856b" stroke-width=".8" fill="none"/>
<!-- nose -->
<path d="M741.500 417.500c1 4.500 2.400 9 2.600 12.500l-1.600 2.600-3.400.8" stroke="#b67e63" stroke-width="1.100" fill="none" stroke-linecap="round"/>
<path d="M744.500 419l2.300 10-1.400 3.200-2.400 1z" fill="#edc4aa" opacity=".7"/>
<!-- mouth -->
<path d="M729 441c3-1.200 6-1.300 8.500-.6 2.300-.6 4.500-.3 6.200.7" stroke="#a3564a" stroke-width="1.300" stroke-linecap="round" fill="none"/>
<path d="M731.500 443.200c3.500 1.300 7.500 1.300 10.800 0" stroke="#c48470" stroke-width="1" fill="none" stroke-linecap="round"/>
<!-- hair -->
<path d="M696.600 410.300 696 401.800 697.500 396 700.900 390.800 704.500 386.300 709.400 382.200 715 379.300 721.700 377.300 728 376.800 733.900 378 740 379 746 381 750.500 383.600 754.700 387 757.800 390.500 760.200 394.400 760 400 758.300 405.500 756.500 409 754.700 411.800 752.200 404.200 749.500 400.600 746 398 740 395.600 734 394.400 729.500 394.800 725.300 396.300 721.500 399.300 718 403 715.700 406.500 713.700 410.300 712 414.500 710.700 418.900 709.300 423.500 708.200 427.500 706.400 433.600 705.500 426 705 419 703 416 700.900 414z" fill="#3b2216"/>
<path d="M700.500 397c5-9 15-15 27-16 10-.5 19 3 26 10" stroke="#5e3a27" stroke-width="2" fill="none" opacity=".75" stroke-linecap="round"/>
<path d="M712 392c6-6 14-9 23-8.500" stroke="#6b4531" stroke-width="1.600" fill="none" opacity=".6" stroke-linecap="round"/>
<path d="M746 398c3 1.500 5.500 4 6.200 6.200l2.500 7.400 3.600-6 1.700-5.600z" fill="#2a170f"/>
<!-- phone -->
<path d="M733.500 507.300 758 512c1.600.4 2.400 1.600 2 3.200L750 540 727 527z" fill="#a88762"/>
<path d="M733.500 507.300 758 512c1.600.4 2.400 1.600 2 3.200l-1 2.500-26.500-6z" fill="#bb9a74" opacity=".6"/>
<rect x="730.500" y="511.500" width="7" height="8" rx="2" fill="#5b4434" transform="rotate(12 734 515)"/>
<!-- hand with phone -->
<path d="M696.700 538 706.700 529 725 526 732 529 744.500 531.500 750 541 744.500 549 733.500 553.500 713.500 557 698 555.600 695.500 544.500z" fill="#dba88c"/>
<path d="M707 536c10-2 24-2 36 1M712 543.500c10-1 20-.5 32 1.500M716 550c8-1 16-.5 24 1" stroke="#b9806a" stroke-width="1" fill="none" stroke-linecap="round"/>
<!-- belt -->
<path d="M697.800 598 751 596.700 751.500 609 698 613.500z" fill="#2a1b12"/>
<rect x="708.500" y="600.500" width="15.500" height="13.500" rx="1.500" fill="none" stroke="#b7a48f" stroke-width="1.700"/>
<!-- pocket hand -->
<path d="M728.900 623.300 737.800 614.400 751 607.800 764.400 611 770 620 766.700 627.800 751 629 740 624.400 731 627.800z" fill="#dba88c"/>
<path d="M740 624c4-3 9-5 14-5" stroke="#b9806a" stroke-width="1" fill="none"/>
</g>
</g>
<!--P-PHOTOS-->
<g>
<defs>
<clipPath id="c1"><rect x="685.500" y="289" width="56.500" height="72.500"/></clipPath>
<clipPath id="c2"><rect x="750" y="289.500" width="58" height="73.500"/></clipPath>
<clipPath id="c3"><rect x="889.700" y="522.700" width="98.300" height="142.300"/></clipPath>
<linearGradient id="sb" x1="0" y1="0" x2="0" y2="1"><stop offset="0" stop-color="#ebaa52"/><stop offset=".3" stop-color="#eba24c"/><stop offset=".62" stop-color="#ee5530"/><stop offset="1" stop-color="#ee4c2c"/></linearGradient>
</defs>
<!-- photo 1: woman -->
<g clip-path="url(#c1)">
<rect x="685" y="288" width="58" height="75" fill="#6f6d64"/>
<rect x="685" y="288" width="35" height="31" fill="#22231b"/>
<rect x="690" y="291" width="7" height="18" fill="#3a3d30" opacity=".7"/><rect x="699" y="291" width="6" height="18" fill="#34372b" opacity=".7"/>
<rect x="720" y="289" width="22" height="24" fill="#5b584a"/>
<rect x="733" y="300" width="4" height="12" fill="#8a8672" opacity=".6"/>
<rect x="728" y="313" width="14" height="6" fill="#1e1f19"/>
<rect x="685" y="319" width="57" height="13" fill="#75736a"/>
<path d="M696.500 331c-2.500-16 0-37 16.500-37.500 15 0 19 18 15.500 37l-3 5h-26z" fill="#c4955b"/>
<path d="M704 311c0-8 3.800-12.500 9-12.500s9 4.500 9 12.500c0 8.500-3.800 14.500-9 14.500s-9-6-9-14.500z" fill="#dcae90"/>
<path d="M708 322h10l.500 8 2 0-8 13.500-8-13.500 3 0z" fill="#d4a285"/>
<path d="M685.500 338c3-4 10-6 19.500-8l7.500 13 8-13c9 2 16 3.500 20.500 8l1.500 24h-57z" fill="#8b3419"/>
<path d="M712.500 343v19" stroke="#c99478" stroke-width="1.300"/>
<path d="M698 329c-3-12-1-26 8-31-4 9-4.500 20-3 32zM726.500 329c2-10 1.500-22-4-29 6 4 9.500 16 8 29z" fill="#b17f47"/>
<path d="M707.500 309h3.600M715 309h3.600" stroke="#6b4a3a" stroke-width=".9"/><path d="M710.500 319.500c1.600.7 3.400.7 5 0" stroke="#b5705e" stroke-width=".9" fill="none"/>
</g>
<!-- photo 2: man -->
<g clip-path="url(#c2)">
<rect x="749" y="288" width="60" height="76" fill="#e9a16f"/>
<path d="M750 363c0-14 3-20.500 12-24l10-5h14l10 5c9 3.500 12 10 12 24z" fill="#a7c8cf"/>
<path d="M771.500 326h15v9c-4.500 3.500-10.500 3.500-15 0z" fill="#75401f"/>
<ellipse cx="779.500" cy="303.500" rx="13.600" ry="11" fill="#1b1411"/>
<path d="M769.300 312c0-8 4-12 10-12s10.200 4 10.200 12c0 9.500-4.200 17.500-10.200 17.500s-10-8-10-17.500z" fill="#8c4f30"/>
<path d="M769.300 313c-.5-6 1.500-10 4.500-12 3-1.500 8-1.500 11.500 0 3 2 4.700 6 4.200 12-.8-5-3.500-7.500-10-7.500s-9.400 2.500-10.200 7.500z" fill="#1b1411"/>
<path d="M773 311.500h4.500M781.500 311.500h4.500" stroke="#2a1710" stroke-width="1.100"/>
<path d="M774.300 321.500c3.200 1.800 7 1.800 10.200 0-1 3-2.800 4.500-5.100 4.500s-4.100-1.500-5.100-4.500z" fill="#f1e4da"/>
<path d="M771 341.500c5 3.500 12 3.500 17 0" stroke="#8fb3bb" stroke-width="1" fill="none"/>
</g>
<!-- FIRST starburst -->
<path d="M853.2 520.5L856.8 528.0L863.0 522.4L863.3 530.7L871.2 527.8L868.3 535.6L876.8 535.9L871.1 542.0L878.7 545.5L871.1 549.0L876.8 555.1L868.3 555.4L871.2 563.2L863.3 560.3L863.0 568.6L856.8 563.0L853.2 570.5L849.6 563.0L843.4 568.6L843.1 560.3L835.2 563.2L838.1 555.4L829.6 555.1L835.3 549.0L827.7 545.5L835.3 542.0L829.6 535.9L838.1 535.6L835.2 527.8L843.1 530.7L843.4 522.4L849.6 528.0z" fill="url(#sb)"/>
<rect x="840.800" y="537.600" width="26.500" height="12" fill="none" stroke="#9a42c6" stroke-width="1.700"/>
<text x="853.800" y="547.300" font-size="8.600" font-weight="700" fill="#fdf3e6" stroke="#fdf3e6" stroke-width=".3" text-anchor="middle" textLength="21.500" lengthAdjust="spacingAndGlyphs">FIRST</text>
<!-- photo 3: tripod pair -->
<g clip-path="url(#c3)">
<rect x="889" y="522" width="100" height="56" fill="#c8d2df"/>
<rect x="889" y="577.500" width="100" height="88" fill="#e6533a"/>
<ellipse cx="935" cy="656" rx="42" ry="3.500" fill="#c63f2b" opacity=".7"/>
<!-- tripod -->
<path d="M941.600 578 921.500 646.500M941.600 578 953 655M941.600 580 944 610" stroke="#4a1c14" stroke-width="1.500" fill="none" stroke-linecap="round"/>
<path d="M936 575.500l12.500-2 1 2.200-12.500 2.500z" fill="#e9ecef"/>
<!-- man -->
<path d="M899 556c2-4 7-6 11-6l6 3c5 4 7 12 7 22l12 1.500 3 3.500-14 3-2 22c0 16-1 32-2 45l-7 .5 .5-38-4 .5-5 37-8.500-.5c1-14 4-30 5-45l-5-2c-1-16 0-34 3-47z" fill="#25262a"/>
<path d="M913 553l3 4 2 14-3-12z" fill="#e8e8ea"/>
<ellipse cx="916.300" cy="544.500" rx="5.600" ry="6.800" fill="#8a5234"/>
<path d="M909.500 544c-1-6 3-10 8-10 4 0 7 2 7.500 5-3-1-6-.5-8 2-1.500 2-1 6-2.500 8.500-2.500-.5-4.500-2.500-5-5.500z" fill="#17120f"/>
<path d="M894.500 650.500c4-1.500 9-1.500 13 0l.5 4.500h-14zM912 649c4-1.500 10-1 15 2l.5 3h-15.500z" fill="#1a1311"/>
<path d="M929 577l9 .5 .5 2.500-9 .5z" fill="#8a5234"/>
<!-- woman -->
<path d="M958 566c2-4 6-6 10-5.500 4 1 6 5 6 10l-.5 14.500-15 1-1-8z" fill="#c9684e"/>
<path d="M959 572l-14 5.500-2 2.500 3 1 15-3.500z" fill="#a8694a"/>
<path d="M957 585l16.500-1c4 14 7 34 8 56-9 2.500-21 2.500-29 0 0-20 1.500-40 4.500-55z" fill="#2a2320"/>
<path d="M958 641l4 .5-1 10h-3.500zM970 641.500l4-.5 1 10.500h-3.500z" fill="#b98366"/>
<path d="M945.500 653c3-2.500 9-3 14.500-2l.5 4.500h-15zM962 655c3-3 9-4 14.500-3l1 5h-15.500z" fill="#e8dcd2"/>
<ellipse cx="964.300" cy="551.500" rx="5.300" ry="6.600" fill="#9a6246"/>
<path d="M960 545.500c2-4 8-5 12-2 2 1.500 3 4 3 7 2.500 1 3.500 3.500 2.500 6.500-1 2.500-3.500 3.500-6 2.500-1.500-1-2-3-1.500-5-2-3-5-6-10-9z" fill="#2d1d17"/>
</g>
<!-- purple block arcs -->
<g fill="none" stroke-linecap="butt">
<path d="M827.900 588.600C835 586.500 842 585.500 849 585.900 857 586.500 862 589 864.600 592.600 868.500 597 870.800 601 870.800 606 870.800 612 869 617 865.600 620.500 862.500 624 859 626.500 855.300 627.700 852 628.800 848.500 629.300 844.500 629.300" stroke="#cf78b4" stroke-width="6.200" opacity=".92"/>
<path d="M824.300 618.800C828 614.500 832 611.800 835.700 610 840 608.500 845 608 850 608" stroke="#cf78b4" stroke-width="5" opacity=".92"/>
<path d="M818 616.300l5.800-2.500M818.600 648.400l15.400-11.900" stroke="#d9a35c" stroke-width="2.400"/>
</g>
<!-- icon strip -->
<g stroke="#1c1a22" stroke-width=".7" stroke-linejoin="round">
<path d="M821.500 660l3-2.500-1-3.300 3.500 1.200 2.600-2.200.2 3.500 3 1.300-3.200 1.500.2 3.500-2.800-2.300-3 1.600 1-2.800z" fill="#2f8fd0"/>
<path d="M831.500 664.500v-6l4-4 4 4v6z" fill="#efa63a"/><circle cx="835.500" cy="660.500" r="1.300" fill="#a8601a" stroke="none"/>
<path d="M841.300 664.600l2.200-10 4.800.8-2.600 10z" fill="#4f9f58"/>
<rect x="851.300" y="655" width="7" height="8.500" rx=".8" fill="#f6f4f2"/><rect x="851.300" y="655" width="7" height="2.400" fill="#df4b43" stroke="none"/><rect x="852.800" y="659.500" width="4" height="1.200" fill="#7fb0e4" stroke="none"/>
<path d="M861 657.500c0-1.800 1.500-3 3.500-3h4c2 0 3.500 1.200 3.500 3v6.500h-11z" fill="#f0ad3a"/><rect x="863.300" y="659.300" width="6.400" height="1.300" fill="#c07e1c" stroke="none"/>
</g>
<path d="M878.800 654.500h3.600v3.300h3.300v3.600h-3.300v3.300h-3.600v-3.300h-3.300v-3.600h3.300z" fill="#0d0d0f"/>
</g>
<!--P-TEXT-->
<g font-weight="700">
<text x="684.300" y="274.400" font-size="47" stroke="#f8ebe6" stroke-width="1.500" fill="#f8ebe6" textLength="131.500" lengthAdjust="spacingAndGlyphs">PITCH</text>
<text x="831.200" y="274.400" font-size="47" stroke="#f8ebe6" stroke-width="1.500" fill="#f8ebe6" textLength="146.500" lengthAdjust="spacingAndGlyphs">NIGHT</text>
<text x="832" y="294" font-size="10.500" fill="#fff" textLength="143.500" lengthAdjust="spacingAndGlyphs">Startup – Connect – Fund</text>
<text x="832" y="317.300" font-size="18" fill="#d76b97" stroke="#d76b97" stroke-width=".6" textLength="83" lengthAdjust="spacingAndGlyphs">STARTUP</text>
<text x="832" y="356.500" font-size="35.500" fill="#d76b97" stroke="#d76b97" stroke-width="1" textLength="144" lengthAdjust="spacingAndGlyphs">EDITION</text>
<g fill="#0c0c0e">
<text x="830" y="389.300" font-size="15" textLength="40" lengthAdjust="spacingAndGlyphs">Pitch</text>
<text x="830" y="403.800" font-size="15" textLength="65" lengthAdjust="spacingAndGlyphs">Network</text>
<text x="830" y="418.500" font-size="15" textLength="102.500" lengthAdjust="spacingAndGlyphs">Win Funding</text>
<text x="830" y="441.800" font-size="13.500" textLength="40" lengthAdjust="spacingAndGlyphs">Sep 28</text>
<text x="830" y="454.800" font-size="8.300" textLength="74.500" lengthAdjust="spacingAndGlyphs">6:00 PM – 9:00 PM</text>
</g>
</g>
<g fill="#6d6770">
<text x="830" y="464.600" font-size="7.500" textLength="36" lengthAdjust="spacingAndGlyphs" fill="#8a838c">LOCATION</text>
<text x="831.500" y="474.300" font-size="4.400" fill="#9a94a0" textLength="32" lengthAdjust="spacingAndGlyphs">Innovation Loft</text>
<text x="831.500" y="480.600" font-size="4.400" fill="#9a94a0" textLength="72" lengthAdjust="spacingAndGlyphs">A creative space for startups</text>
<text x="832.500" y="493.800" font-size="4.800" fill="#3a3540" textLength="46" lengthAdjust="spacingAndGlyphs">Who Should Attend</text>
<g font-size="2.900" fill="#2e2a33">
<text x="831.500" y="501.800">•  Startup founders</text>
<text x="831.500" y="506.300">•  Angel investors &amp; VC firms</text>
<text x="831.500" y="510.700">•  Mentors and tech experts</text>
<text x="831.500" y="515.200" textLength="60" lengthAdjust="spacingAndGlyphs">•  Students and innovation enthusiasts</text>
</g>
<rect x="916.600" y="488.500" width="63.100" height="5.800" fill="#9b6be6" opacity=".35"/><rect x="916.600" y="497.400" width="47.700" height="5.800" fill="#9b6be6" opacity=".35"/><rect x="916.600" y="506.300" width="28" height="5.900" fill="#9b6be6" opacity=".35"/><rect x="831" y="489" width="49" height="6" fill="#9b6be6" opacity=".25"/>
<g font-size="4.300" fill="#3a3540">
<text x="918.500" y="493" textLength="59" lengthAdjust="spacingAndGlyphs">Communication &amp; Connection</text>
<text x="918.500" y="501.800" textLength="44" lengthAdjust="spacingAndGlyphs">Security &amp; Technology</text>
<text x="920.500" y="510.700" textLength="23" lengthAdjust="spacingAndGlyphs">E-commerce</text>
</g>
<g font-size="4.300" fill="#4a4450">
<text x="838.500" y="681.200" textLength="93" lengthAdjust="spacingAndGlyphs">•  "Where ideas ignite and futures begin."</text>
<text x="838.500" y="687" textLength="95" lengthAdjust="spacingAndGlyphs">•  "Fueling innovation, one pitch at a time."</text>
<text x="838.500" y="692.800" textLength="80" lengthAdjust="spacingAndGlyphs">•  "Start small. Think big. Pitch bold."</text>
</g>
</g>
<!-- buttons -->
<rect x="914.500" y="438.300" width="60" height="13.600" rx="6.500" fill="#d4709f"/>
<text x="928" y="447.800" font-size="7.400" font-weight="700" fill="#fff" textLength="22" lengthAdjust="spacingAndGlyphs">RSVP</text>
<rect x="960" y="444.300" width="7" height="1.500" fill="#fff"/>
<rect x="914.500" y="460.800" width="60" height="14.200" rx="7" fill="#0a0a0b"/>
<text x="921.500" y="470.500" font-size="7.300" fill="#fff" textLength="46" lengthAdjust="spacingAndGlyphs" stroke="#fff" stroke-width=".2">Apply to Pitch</text>
<!-- small icons -->
<g fill="#1b1820">
<rect x="907.300" y="487.300" width="7.500" height="7.500" fill="#8b5fe0" opacity=".35"/>
<path d="M908.500 493l2.700-4.500 2.700 4.500z"/>
<rect x="907.300" y="497.500" width="7.500" height="7.500" fill="#8b5fe0" opacity=".35"/>
<circle cx="911" cy="501.300" r="2"/>
<rect x="907.300" y="506.500" width="7.500" height="7.300" fill="#8b5fe0" opacity=".35"/>
<path d="M909 508.500h4v3.500h-4z" fill="#f3e9f3"/>
</g>
<!--P-SEL-->
<g fill="none" stroke="#8240f5" stroke-width="1.400">
<rect x="671.5" y="226.5" width="317.0" height="476.0"/><rect x="671.5" y="226.5" width="146.0" height="142.5"/><rect x="817.5" y="226.5" width="171.0" height="142.5"/><rect x="684" y="233.5" width="292.5" height="54.5"/><rect x="832" y="288" width="142.5" height="9.5"/><rect x="830.5" y="299.5" width="86.5" height="21.5"/><rect x="830.5" y="321" width="146.5" height="44.0"/><rect x="684.5" y="287" width="59.0" height="76.0"/><rect x="748.5" y="284.5" width="60.5" height="79.5"/><rect x="644" y="375.5" width="173.3" height="335.8"/><rect x="671.5" y="369" width="145.8" height="333.5"/><rect x="829" y="376.5" width="42.0" height="15.0"/><rect x="829" y="392" width="67.0" height="14.5"/><rect x="829" y="407" width="103.0" height="18.0"/><rect x="829" y="429" width="41.5" height="15.0"/><rect x="829" y="447.5" width="75.0" height="9.0"/><rect x="829" y="458" width="37.0" height="7.5"/><rect x="829.5" y="469" width="77.5" height="13.3"/><rect x="831" y="489" width="49.0" height="6.0"/><rect x="829" y="497.5" width="64.0" height="21.5"/><rect x="912.7" y="436.5" width="63.5" height="16.8"/><rect x="912.7" y="459.2" width="63.5" height="17.2"/><rect x="906.5" y="486.4" width="8.5" height="9.1"/><rect x="906.5" y="497.5" width="8.5" height="8.0"/><rect x="906.5" y="506.5" width="8.5" height="7.2"/><rect x="916.6" y="488.5" width="63.1" height="5.8"/><rect x="916.6" y="497.4" width="47.7" height="5.8"/><rect x="916.6" y="506.3" width="28.0" height="5.9"/><rect x="826.3" y="519.3" width="53.7" height="51.9"/><rect x="889.4" y="522.1" width="98.6" height="143.1"/><rect x="817.3" y="577.7" width="72.1" height="73.5"/><rect x="820" y="652.9" width="66.6" height="12.3"/><rect x="834.5" y="675.3" width="102.0" height="19.1"/><rect x="840.3" y="537.5" width="27.0" height="12.3"/>
</g>
<g stroke="#fff" stroke-width="2.600" fill="none" stroke-dasharray="3 2.400"><path d="M650 226.500h21"/><path d="M644.300 232v142"/><path d="M818 711.500h166"/></g>
<g stroke="#c9ccd3" stroke-width=".6" fill="none" opacity=".9"><path d="M650 225.200h21M650 227.800h21M643 232v142M645.600 232v142M818 710.200h166M818 712.800h166"/></g>
<circle cx="644.3" cy="226.5" r="5.400" fill="#fff" stroke="#c2c5cc" stroke-width=".9"/><circle cx="988.5" cy="226.5" r="5.400" fill="#fff" stroke="#c2c5cc" stroke-width=".9"/><circle cx="644.3" cy="711.5" r="5.400" fill="#fff" stroke="#c2c5cc" stroke-width=".9"/><circle cx="988.5" cy="711.5" r="5.400" fill="#fff" stroke="#c2c5cc" stroke-width=".9"/>
</svg>
<div class="abs" style="left:723.500px;top:177px;width:185px;height:30px;border-radius:15px;background:#fff;box-shadow:0 1px 5px rgba(50,60,80,.22)"></div>
<svg class="abs" style="left:729px;top:182px" width="20" height="19" viewBox="0 0 20 19" fill="none" stroke-linecap="round" stroke-linejoin="round"><defs><linearGradient id="mg" x1="0" y1="1" x2="1" y2="0"><stop offset="0" stop-color="#8a4cf0"/><stop offset="1" stop-color="#3d8be8"/></linearGradient></defs><path d="M13.600 3.600a1.700 1.700 0 0 1 2.400 0l.6.600a1.700 1.700 0 0 1 0 2.400L8.400 14.800l-4 1 1-4z" stroke="url(#mg)" stroke-width="1.400"/><path d="M12.200 5l3 3" stroke="url(#mg)" stroke-width="1.200"/><path d="M5.600 1.200l.7 1.700 1.700.7-1.700.7-.7 1.700-.7-1.700-1.700-.7 1.700-.7z" fill="#1f9ad6"/><path d="M2.400 6.600l.4.900.9.400-.9.400-.4.900-.4-.9-.9-.4.900-.4z" fill="#1f9ad6"/></svg>
<div class="abs" style="left:759px;top:184.500px;font-size:12.500px;font-weight:700;line-height:15px;letter-spacing:-.15px;color:#15191f">Group</div>
<svg class="abs" style="left:805.500px;top:181.500px" width="16" height="18" viewBox="0 0 16 18" fill="none" stroke="#15191f" stroke-width="1.400" stroke-linecap="round" stroke-linejoin="round"><rect x="2.200" y="7.600" width="11.600" height="9" rx="2"/><path d="M4.800 7.600V5.200a3.200 3.200 0 0 1 6.300-.8"/><path d="M8 10.800v2.800M7 11.600l1-1 1 1" stroke-width="1.200"/></svg>
<svg class="abs" style="left:831.500px;top:182.500px" width="17" height="17" viewBox="0 0 17 17" fill="none" stroke="#15191f" stroke-width="1.400" stroke-linecap="round" stroke-linejoin="round"><rect x="5.600" y="5.600" width="9.600" height="9.600" rx="2"/><path d="M3.400 11.600A1.800 1.800 0 0 1 1.800 9.800V3.800c0-1.100.9-2 2-2h6c.9 0 1.600.6 1.800 1.400"/><path d="M10.400 8.200v4.400M8.200 10.400h4.400" stroke-width="1.300"/></svg>
<svg class="abs" style="left:859px;top:181.500px" width="16" height="18" viewBox="0 0 16 18" fill="none" stroke="#15191f" stroke-width="1.400" stroke-linecap="round" stroke-linejoin="round"><path d="M1.800 4.400h12.400M5.400 4.200V3c0-.8.600-1.400 1.400-1.400h2.400c.8 0 1.400.6 1.400 1.400v1.200"/><path d="M3.200 4.600l.5 10c.1 1 .8 1.700 1.800 1.700h5c1 0 1.700-.7 1.800-1.700l.5-10"/><path d="M6.400 7.600v5.600M9.600 7.600v5.600" stroke-width="1.300"/></svg>
<svg class="abs" style="left:886px;top:189.500px" width="16" height="4" viewBox="0 0 16 4" fill="#15191f"><circle cx="2" cy="2" r="1.500"/><circle cx="8" cy="2" r="1.500"/><circle cx="14" cy="2" r="1.500"/></svg>
<svg class="abs" style="left:909.500px;top:202.500px" width="14" height="16" viewBox="0 0 16 18" fill="none" stroke="#4d525a" stroke-width="1.400" stroke-linecap="round" stroke-linejoin="round"><rect x="2.200" y="7.600" width="11.600" height="9" rx="2"/><path d="M4.800 7.600V5.200a3.200 3.200 0 0 1 6.300-.8"/><path d="M8 10.800v2.800M7 11.600l1-1 1 1" stroke-width="1.200"/></svg>
<svg class="abs" style="left:939.500px;top:204px" width="15" height="15" viewBox="0 0 17 17" fill="none" stroke="#4d525a" stroke-width="1.400" stroke-linecap="round" stroke-linejoin="round"><rect x="5.600" y="5.600" width="9.600" height="9.600" rx="2"/><path d="M3.400 11.600A1.800 1.800 0 0 1 1.800 9.800V3.800c0-1.100.9-2 2-2h6c.9 0 1.600.6 1.800 1.400"/><path d="M10.400 8.200v4.400M8.200 10.400h4.400" stroke-width="1.300"/></svg>
<svg class="abs" style="left:969px;top:202.500px" width="16" height="16" viewBox="0 0 16 16" fill="none" stroke="#4d525a" stroke-width="1.300" stroke-linecap="round" stroke-linejoin="round"><path d="M7 3.400H4c-1 0-1.800.8-1.800 1.800v7.600c0 1 .8 1.800 1.800 1.800h7.600c1 0 1.800-.8 1.800-1.800V9.600"/><path d="M11.600 1.200v6M8.600 4.200h6"/></svg>
<div class="abs" style="left:672px;top:723px;width:316.500px;height:31px;border:1px solid #b9bcc2;border-radius:6px;background:#f1f2f6"></div>
<div class="abs" style="left:960.500px;top:723.500px;width:1px;height:30px;background:#b9bcc2"></div>
<svg class="abs" style="left:969px;top:734.500px" width="10" height="7" viewBox="0 0 10 7" fill="none" stroke="#15191f" stroke-width="1.500" stroke-linecap="round" stroke-linejoin="round"><path d="M1.400 1.400 5 5l3.600-3.600"/></svg>
<div class="abs" style="left:785px;top:731px;font-size:12.500px;font-weight:700;line-height:15px;letter-spacing:-.1px;color:#15191f">+ Add page</div>
<div class="abs" style="left:806.500px;top:740.500px;width:19px;height:19px;border-radius:50%;background:#fff;box-shadow:0 0 3px rgba(50,60,80,.35)"></div>
<svg class="abs" style="left:810.500px;top:744.500px" width="11" height="11" viewBox="0 0 11 11" fill="none" stroke="#15191f" stroke-width=".95" stroke-linecap="round" stroke-linejoin="round"><path d="M2 6.600A3.600 3.600 0 0 1 7.400 2.300M9 4.400A3.600 3.600 0 0 1 3.600 8.700"/><path d="M7.600 .8v1.800H5.800M3.400 10.200V8.400h1.800"/></svg>
</div>
<!-- BOTTOM -->
<div id="bot">
<svg class="abs" style="left:72.500px;top:875.500px" width="17" height="16" viewBox="0 0 17 16" fill="none" stroke="#15191f" stroke-width="1.400" stroke-linecap="round" stroke-linejoin="round"><path d="M1.400 3h11.200M1.400 6.800h7.200M1.400 10.600h4"/><path d="M12.800 6.200a1.300 1.300 0 0 1 1.900 0l.3.300a1.300 1.300 0 0 1 0 1.900L9.600 13.800l-2.800.7.700-2.800z" stroke-width="1.200"/></svg>
<div class="t" style="left:93.500px;top:877.300px;letter-spacing:-.05px">Notes</div>
<div class="abs" style="left:1140px;top:882.300px;width:165px;height:2.200px;border-radius:1px;background:#cfd2d7"></div>
<div class="abs" style="left:1139px;top:882px;width:3px;height:3px;border-radius:50%;background:#b9bcc2"></div><div class="abs" style="left:1303px;top:882px;width:3px;height:3px;border-radius:50%;background:#b9bcc2"></div>
<div class="abs" style="left:1145px;top:875.500px;width:16px;height:16px;border-radius:50%;background:#fff;box-shadow:0 0 2.500px rgba(40,50,70,.45)"></div>
<div class="t" style="left:1327.500px;top:877.200px">11%</div>
<div class="abs" style="left:1373.500px;top:876px;width:1px;height:15px;background:#d3d6db"></div>
<svg class="abs" style="left:1386px;top:875px" width="18" height="17" viewBox="0 0 18 17" fill="none" stroke="#15191f" stroke-width="1.400" stroke-linejoin="round"><rect x="2" y="1.600" width="14" height="8.200" rx="1.400"/><rect x="2" y="11.800" width="14" height="3.800" rx="1"/><path d="M6.700 11.800v3.800M11.300 11.800v3.800"/></svg>
<div class="t" style="left:1409px;top:877.200px;letter-spacing:-.5px">Pages</div>
<div class="t" style="left:1462px;top:877.200px;letter-spacing:.6px">1 / 1</div>
<svg class="abs" style="left:1505px;top:876px" width="16" height="15" viewBox="0 0 16 15" fill="none" stroke="#15191f" stroke-width="1.400" stroke-linejoin="round"><rect x="1.800" y="1.400" width="4.600" height="4.600" rx="1.200"/><rect x="9.600" y="1.400" width="4.600" height="4.600" rx="1.200"/><rect x="1.800" y="9" width="4.600" height="4.600" rx="1.200"/><rect x="9.600" y="9" width="4.600" height="4.600" rx="1.200"/></svg>
<svg class="abs" style="left:1538.500px;top:875.500px" width="16" height="16" viewBox="0 0 16 16" fill="none" stroke="#15191f" stroke-width="1.400" stroke-linecap="round" stroke-linejoin="round"><path d="M9.200 6.800l5-5M10.400 1.600h4v4M6.800 9.200l-5 5M5.600 14.400h-4v-4"/></svg>
<svg class="abs" style="left:1571px;top:875px" width="18" height="18" viewBox="0 0 18 18" fill="none" stroke="#15191f" stroke-width="1.400" stroke-linecap="round" stroke-linejoin="round"><circle cx="9" cy="9" r="7.400"/><path d="M6.800 7.200c0-1.300 1-2.200 2.300-2.200s2.200.9 2.200 2c0 1.600-2.200 1.700-2.200 3.400"/><circle cx="9.100" cy="12.700" r=".5" fill="#15191f"/></svg>
</div>
</body>
</html>
